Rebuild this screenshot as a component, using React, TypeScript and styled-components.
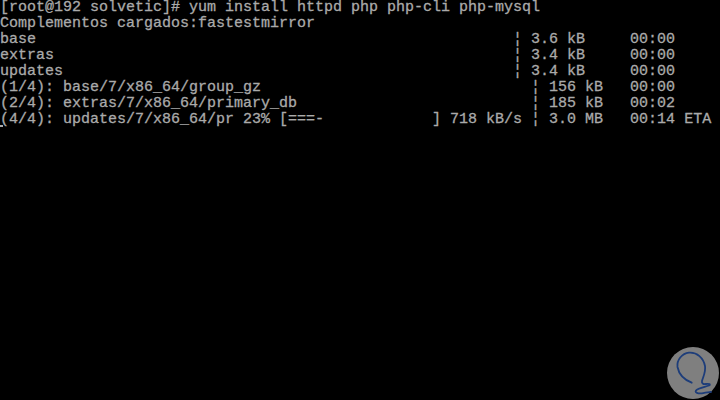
import React from "react";
import styled, { createGlobalStyle } from "styled-components";

const GlobalStyle = createGlobalStyle`
  html, body {
    margin: 0;
    padding: 0;
    background: #000;
  }
`;

const Screen = styled.div`
  position: relative;
  width: 720px;
  height: 400px;
  overflow: hidden;
  background-color: #000;
  display: flex;
  flex-direction: column;
`;

const Line = styled.div`
  height: 16px;
  line-height: 16px;
  font-family: "Liberation Mono", "DejaVu Sans Mono", monospace;
  font-size: 15px;
  color: #aaaaaa;
  -webkit-text-stroke: 0.3px #aaaaaa;
  white-space: pre;
`;

const Cursor = styled.span`
  text-decoration: underline;
  text-decoration-thickness: 2px;
  text-underline-offset: 2px;
`;

const Logo = styled.svg`
  position: absolute;
  left: 667px;
  top: 347px;
  width: 52px;
  height: 52px;
`;

const lines = [
  "[root@192 solvetic]# yum install httpd php php-cli php-mysql",
  "Complementos cargados:fastestmirror",
  "base                                                     ¦ 3.6 kB     00:00",
  "extras                                                   ¦ 3.4 kB     00:00",
  "updates                                                  ¦ 3.4 kB     00:00",
  "(1/4): base/7/x86_64/group_gz                              ¦ 156 kB   00:00",
  "(2/4): extras/7/x86_64/primary_db                          ¦ 185 kB   00:02",
];

const progress =
  "4/4): updates/7/x86_64/pr 23% [===-            ] 718 kB/s ¦ 3.0 MB   00:14 ETA";

export default function App() {
  return (
    <>
      <GlobalStyle />
      <Screen>
        {lines.map((l, i) => (
          <Line key={i}>{l}</Line>
        ))}
        <Line>
          <Cursor>(</Cursor>
          {progress}
        </Line>
        <Logo viewBox="0 0 52 52">
          <circle cx="26" cy="26" r="26" fill="#7f7f7f" />
          <path
            d="M24.7 35.7 C18 33 12 28 10.5 20 C9.5 13 15 6.5 22 5.7 C30 5 36.5 11 38 19 C39 25 36 30 35 34 C34.5 36 36 37.5 39 37 C42 36.8 44 37.2 42 38.5 C38 40 31 41 29 43.5 C27.5 45.5 31 46.8 35 46.3 C39 45.8 42 45.3 44 45"
            fill="none"
            stroke="#1d3d7a"
            strokeWidth="1.8"
            strokeLinecap="round"
            strokeLinejoin="round"
          />
        </Logo>
      </Screen>
    </>
  );
}
